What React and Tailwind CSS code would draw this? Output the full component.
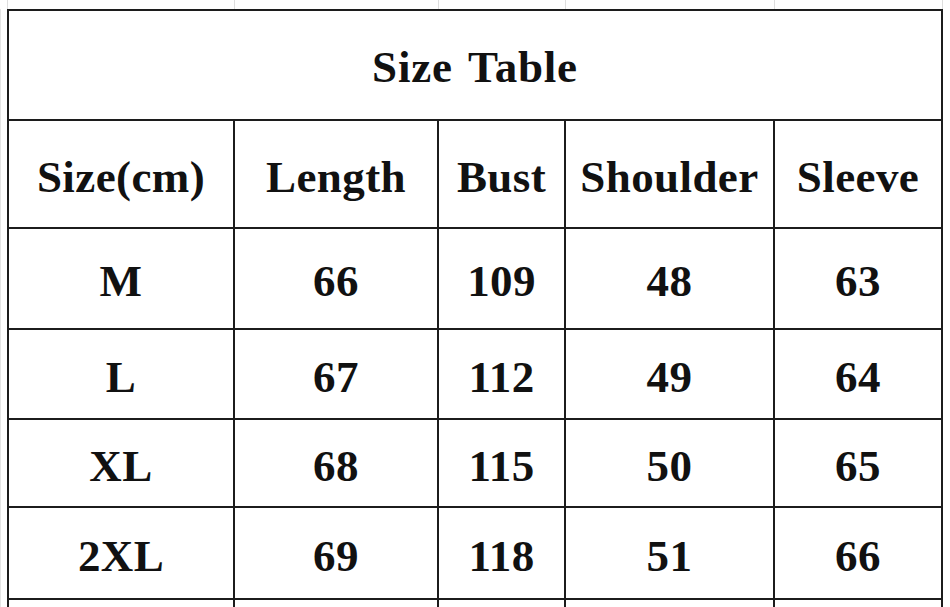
import React from "react";

const cols = ["w-[226px]", "w-[204px]", "w-[127px]", "w-[209px]", "w-[168px]"];

const header = ["Size(cm)", "Length", "Bust", "Shoulder", "Sleeve"];

const rows = [
  { h: "h-[101px]", cells: ["M", "66", "109", "48", "63"] },
  { h: "h-[90px]", cells: ["L", "67", "112", "49", "64"] },
  { h: "h-[88px]", cells: ["XL", "68", "115", "50", "65"] },
  { h: "h-[92px]", cells: ["2XL", "69", "118", "51", "66"] },
];

function Row({ height, cells }) {
  return (
    <div className={"flex " + height}>
      {cols.map((w, i) => (
        <div
          key={i}
          className={w + " shrink-0 flex items-center justify-center pt-[6px] border-r-2 border-b-2 border-[#1c1c1c]"}
        >
          {cells ? cells[i] : null}
        </div>
      ))}
    </div>
  );
}

export default function App() {
  return (
    <div className="w-[950px] h-[607px] overflow-hidden bg-white font-['Liberation_Serif',serif] font-bold text-[45px] tracking-[0.4px] text-[#111] leading-none">
      {/* faint sheet gridlines above the table */}
      <div className="flex h-[9px] pl-[7px]">
        <div className="w-[2px] shrink-0 border-l border-[#dedede]" />
        {cols.map((w, i) => (
          <div key={i} className={w + " shrink-0 border-r border-[#dedede]"} />
        ))}
      </div>

      <div className="flex">
        <div className="w-[7px] shrink-0 border-l border-[#e4e4e4]" />
        <div className="border-l-2 border-t-2 border-[#1c1c1c]">
          <div className="h-[110px] w-[934px] flex items-center justify-center border-r-2 border-b-2 border-[#1c1c1c] pt-[4px] tracking-[0.8px] [word-spacing:4px]">
            Size Table
          </div>
          <Row height="h-[108px]" cells={header} />
          {rows.map((r) => (
            <Row key={r.cells[0]} height={r.h} cells={r.cells} />
          ))}
          <Row height="h-[40px]" />
        </div>
      </div>
    </div>
  );
}
